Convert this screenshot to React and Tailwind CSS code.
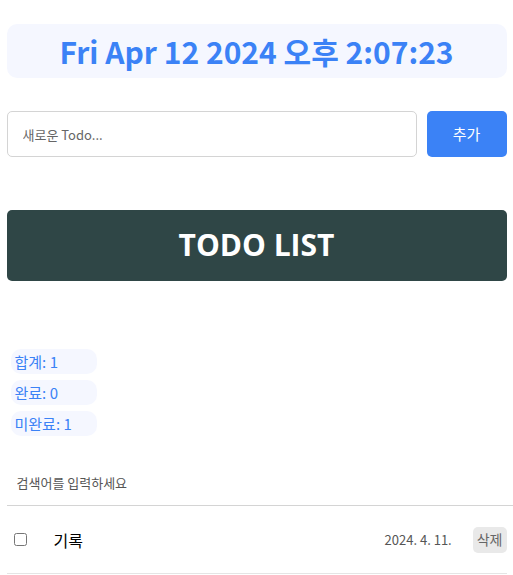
import React, { useState } from "react";

const font = { fontFamily: '"Noto Sans CJK KR", "Noto Sans", sans-serif' };

export default function App() {
  const [todos, setTodos] = useState([
    { id: 1, content: "기록", done: false, date: "2024. 4. 11." },
  ]);
  const [text, setText] = useState("");
  const [search, setSearch] = useState("");

  const total = todos.length;
  const doneCount = todos.filter((t) => t.done).length;

  const toggle = (id) =>
    setTodos((prev) =>
      prev.map((t) => (t.id === id ? { ...t, done: !t.done } : t))
    );

  return (
    <div className="w-full bg-white" style={font}>
      <div className="max-w-[500px] mx-auto pt-6">
        {/* Clock */}
        <div className="h-[54px] rounded-[10px] bg-[#f5f7ff] flex items-center justify-center">
          <h2 className="text-[30px] font-bold text-[#3b82f6] leading-none">
            Fri Apr 12 2024 오후 2:07:23
          </h2>
        </div>

        {/* Editor */}
        <div className="mt-[33px] flex gap-[10px]">
          <input
            value={text}
            onChange={(e) => setText(e.target.value)}
            placeholder="새로운 Todo..."
            className="flex-1 h-[46px] border border-[#d4d4d4] rounded-[5px] px-[15px] text-[13px] placeholder:text-[#666] outline-none"
          />
          <button className="w-[80px] h-[46px] rounded-[5px] bg-[#3b82f6] text-white text-[15px]">
            추가
          </button>
        </div>

        {/* Header */}
        <div
          className="mt-[53px] h-[71px] rounded-[5px] bg-[#2f4646] flex items-center justify-center"
          style={{ fontFamily: '"Open Sans", sans-serif' }}
        >
          <h1 className="text-[30px] font-bold text-white -mt-[3px]">TODO LIST</h1>
        </div>

        {/* Stats */}
        <div className="mt-[68px] pl-1 flex flex-col gap-[6px]">
          <div className="w-[86px] h-[25px] rounded-[10px] bg-[#f5f7ff] text-[#3b82f6] text-[15px] leading-[25px] pl-1">
            합계: {total}
          </div>
          <div className="w-[86px] h-[25px] rounded-[10px] bg-[#f5f7ff] text-[#3b82f6] text-[15px] leading-[25px] pl-1">
            완료: {doneCount}
          </div>
          <div className="w-[86px] h-[25px] rounded-[10px] bg-[#f5f7ff] text-[#3b82f6] text-[15px] leading-[25px] pl-1">
            미완료: {total - doneCount}
          </div>
        </div>

        {/* Search */}
        <div className="mt-[24px]">
          <input
            value={search}
            onChange={(e) => setSearch(e.target.value)}
            placeholder="검색어를 입력하세요"
            className="w-[506px] h-[46px] px-[10px] border-b border-[#d4d4d4] text-[13px] placeholder:text-[#555] outline-none"
          />
        </div>

        {/* List */}
        {todos
          .filter((t) => t.content.includes(search))
          .map((t) => (
            <div
              key={t.id}
              className="h-[68px] flex items-center border-b border-[#e5e5e5]"
            >
              <input
                type="checkbox"
                checked={t.done}
                onChange={() => toggle(t.id)}
                className="ml-[7px] w-[13px] h-[13px]"
              />
              <div className="flex-1 pl-[27px] text-[16px] text-black">
                {t.content}
              </div>
              <div className="text-[13px] text-[#555] mr-[21px]">{t.date}</div>
              <button className="h-[26px] px-[4px] rounded-[5px] bg-[#e9e9e9] text-[#666] text-[14px]">
                삭제
              </button>
            </div>
          ))}
      </div>
    </div>
  );
}
